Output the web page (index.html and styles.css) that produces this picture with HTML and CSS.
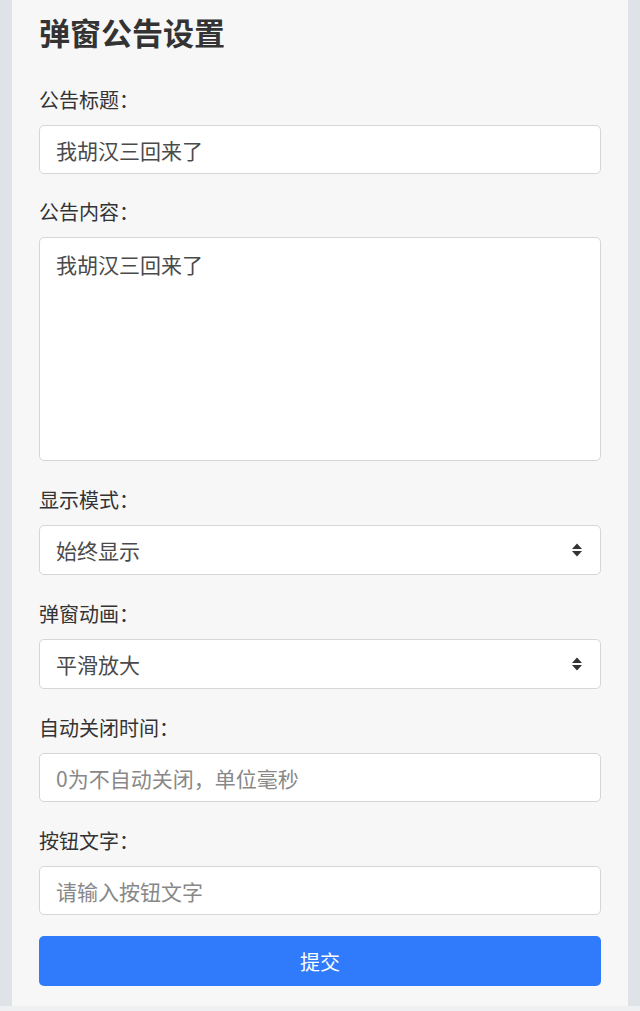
FILE: index.html
```html
<!DOCTYPE html>
<html lang="zh-CN">
<head>
<meta charset="utf-8">
<title>弹窗公告设置</title>
<link rel="stylesheet" href="styles.css">
</head>
<body>
<div class="page">
  <main class="panel">
    <h1 class="title">弹窗公告设置</h1>
    <form class="form">
      <div class="field first">
        <label class="label">公告标题：</label>
        <input class="control" type="text" value="我胡汉三回来了">
      </div>
      <div class="field">
        <label class="label">公告内容：</label>
        <textarea class="control area">我胡汉三回来了</textarea>
      </div>
      <div class="field">
        <label class="label">显示模式：</label>
        <div class="select">
          <span class="select-text">始终显示</span>
          <svg class="arrows" width="12" height="16" viewBox="0 0 12 16"><path d="M6 1.5 L11 7 H1 Z M1 9 H11 L6 14.5 Z" fill="#333"/></svg>
        </div>
      </div>
      <div class="field">
        <label class="label">弹窗动画：</label>
        <div class="select">
          <span class="select-text">平滑放大</span>
          <svg class="arrows" width="12" height="16" viewBox="0 0 12 16"><path d="M6 1.5 L11 7 H1 Z M1 9 H11 L6 14.5 Z" fill="#333"/></svg>
        </div>
      </div>
      <div class="field">
        <label class="label">自动关闭时间：</label>
        <input class="control" type="text" placeholder="0为不自动关闭，单位毫秒">
      </div>
      <div class="field last">
        <label class="label">按钮文字：</label>
        <input class="control" type="text" placeholder="请输入按钮文字">
      </div>
      <button class="submit" type="button">提交</button>
    </form>
  </main>
  <div class="footer-band"></div>
</div>
</body>
</html>
```
FILE: styles.css
```css
* { box-sizing: border-box; }
html, body { margin: 0; padding: 0; }
body {
  background: #dfe2e6;
  font-family: "Noto Sans CJK SC", "Noto Sans", sans-serif;
  color: #333;
}
.page {
  display: flex;
  flex-direction: column;
  min-height: 1011px;
}
.panel {
  margin: 0 12px;
  background: #f7f7f7;
  padding: 12px 27px 20px;
}
.title {
  margin: 0 0 34px;
  font-size: 31px;
  line-height: 40px;
  font-weight: 700;
  color: #333;
}
.form { display: flex; flex-direction: column; }
.field {
  display: flex;
  flex-direction: column;
  margin-bottom: 25px;
}
.field.first { margin-bottom: 24px; }
.field.last { margin-bottom: 21px; }
.label {
  font-size: 20px;
  line-height: 28px;
  margin-bottom: 11px;
  color: #333;
}
.control {
  height: 49px;
  border: 1px solid #d6d6d6;
  border-radius: 5px;
  background: #fff;
  padding: 0 16px;
  font-family: inherit;
  font-size: 21px;
  color: #4a4a4a;
  outline: none;
}
.control::placeholder { color: #888; }
.area {
  height: 224px;
  padding-top: 11px;
  line-height: 30px;
  resize: none;
}
.select {
  height: 50px;
  border: 1px solid #d6d6d6;
  border-radius: 5px;
  background: #fff;
  padding: 0 16px;
  display: flex;
  align-items: center;
  justify-content: space-between;
  font-size: 21px;
  color: #4a4a4a;
}
.arrows { margin-right: 1px; }
.submit {
  height: 50px;
  border: none;
  border-radius: 5px;
  background: #2f7bfc;
  color: #fff;
  font-family: inherit;
  font-size: 20px;
}
.footer-band {
  flex: 1;
  background: #eff0f2;
}
```
